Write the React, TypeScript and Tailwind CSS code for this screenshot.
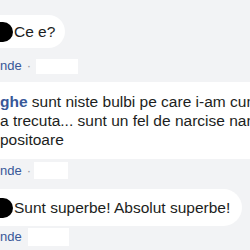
const font = { fontFamily: '"Liberation Sans", Arial, sans-serif' }

function Blob() {
  return <div className="ml-[-12px] mr-[1px] h-[20px] w-[25px] shrink-0 rounded-full bg-black" />
}

export default function App() {
  return (
    <div className="h-[250px] w-[250px] overflow-hidden bg-[#f2f3f5] text-[#1c1e21]" style={font}>
      {/* first comment */}
      <div className="pt-[15px]">
        <div className="flex h-[33px] w-[65px] items-center rounded-r-[18px] bg-white text-[15.5px]">
          <Blob />
          <span>Ce e?</span>
        </div>
      </div>
      <div className="mt-[9px] flex h-[18px] items-center text-[13px] text-[#385898]">
        <span>nde</span>
        <span className="ml-[5px] text-[#90949c]">·</span>
        <div className="ml-[5px] h-[15px] w-[42px] bg-white" />
      </div>

      {/* second comment */}
      <div className="mt-[7px] w-[250px] bg-white py-[10px] text-[15.5px] leading-[19px] whitespace-nowrap">
        <div>
          <span className="font-bold text-[#385898]">ghe</span> sunt niste bulbi pe care i-am cumparat
        </div>
        <div>a trecuta... sunt un fel de narcise nane</div>
        <div>positoare</div>
      </div>
      <div className="mt-[3px] flex h-[17px] items-center text-[13px] text-[#385898]">
        <span>nde</span>
        <span className="ml-[5px] text-[#90949c]">·</span>
        <div className="ml-[3px] h-[17px] w-[34px] bg-white" />
      </div>

      {/* third comment */}
      <div className="mt-[10px] flex h-[37px] w-[242px] items-center rounded-r-[19px] bg-white text-[15.5px] whitespace-nowrap">
        <Blob />
        <span>Sunt superbe! Absolut superbe!</span>
      </div>
      <div className="mt-[2px] flex h-[18px] items-center text-[13px] text-[#385898]">
        <span>nde</span>
        <div className="ml-[6px] h-[18px] w-[41px] bg-white" />
      </div>
    </div>
  )
}
